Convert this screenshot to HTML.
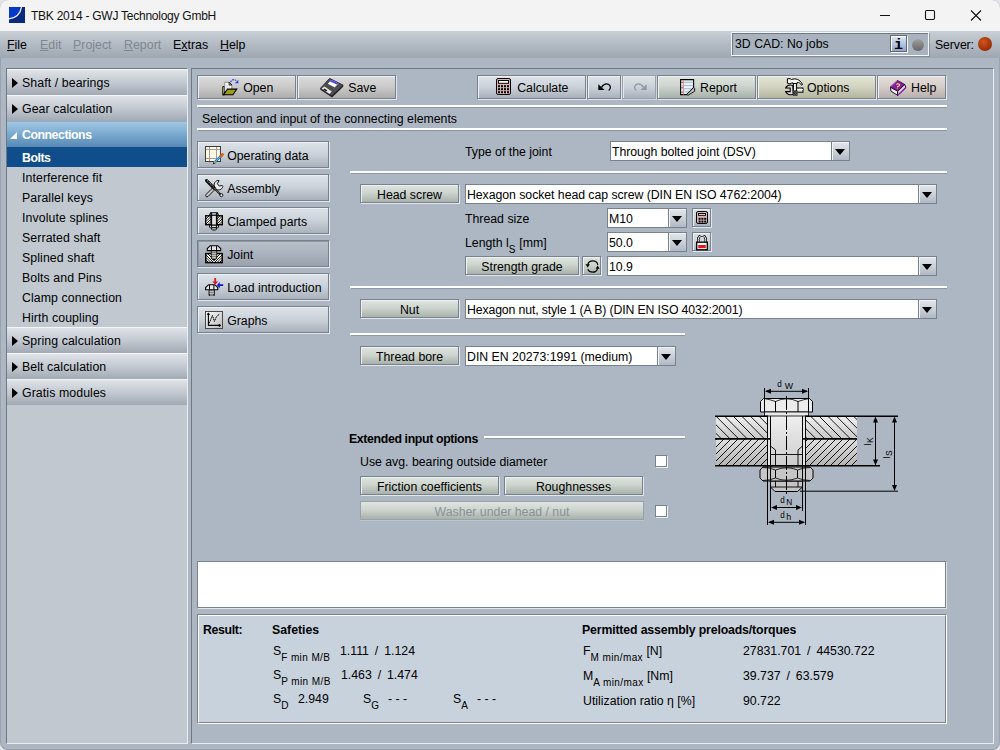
<!DOCTYPE html>
<html><head><meta charset="utf-8"><title>TBK 2014 - GWJ Technology GmbH</title>
<style>
html,body{margin:0;padding:0}
body{width:1000px;height:750px;overflow:hidden;position:relative;background:#e4e4e4;font-family:"Liberation Sans",sans-serif;font-size:12.3px;color:#000;line-height:1}
div,span{box-sizing:border-box}
.a{position:absolute;white-space:nowrap}
#win{position:absolute;left:0;top:0;width:1000px;height:750px;background:#adb7c3;border-radius:8px 8px 8px 8px;overflow:hidden;box-shadow:inset 0 0 0 1px #9aa2ab}
#title{position:absolute;left:0;top:0;width:1000px;height:31px;background:#f3f3f3}
#menubar{position:absolute;left:0;top:31px;width:1000px;height:27px;background:linear-gradient(#c9cfd6 0%,#b4bcc5 45%,#9ea7b1 100%)}
.menu{position:absolute;top:38px;font-size:12.4px;line-height:15px}
.menu u{text-decoration:underline;text-underline-offset:1px}
.dis{color:#7f8791}
/* sidebar */
#side{position:absolute;left:6px;top:68px;width:182px;height:676px;background:#c1c8d0;border-top:1px solid #6f7984;border-left:1px solid #6f7984;border-right:1px solid #e9edf1;border-bottom:1px solid #e9edf1}
.hd{position:absolute;left:0;width:180px;height:26px;background:linear-gradient(#dfe3e8 0%,#c3c9d1 50%,#a1a9b3 100%);border-top:1px solid #f4f6f8;font-size:12.3px;line-height:27px;padding-left:15px;letter-spacing:.1px}
.hd.sel{background:linear-gradient(#a0c7e3 0%,#79a9cf 50%,#5889b5 100%);border-top:1px solid #8fb0c6;color:#fff;font-weight:bold;letter-spacing:-.45px}
.tri{position:absolute;left:5px;top:8px;width:0;height:0;border-left:6px solid #000;border-top:5px solid transparent;border-bottom:5px solid transparent}
.tri2{position:absolute;left:3px;top:10px;width:0;height:0;border-bottom:7px solid #fff;border-left:7px solid transparent}
.it{position:absolute;left:0;width:180px;height:20px;line-height:22px;padding-left:15px;letter-spacing:.1px}
.it.sel{background:#104e8b;color:#fff;font-weight:bold;letter-spacing:-.45px}
/* main */
#main{position:absolute;left:191px;top:68px;width:803px;height:676px;border-top:1px solid #6f7984;border-left:1px solid #6f7984;border-right:1px solid #e9edf1;border-bottom:1px solid #e9edf1}
.btn{position:absolute;border:1px solid #78828d;background:linear-gradient(#dee3e9 0%,#cad1d9 50%,#a9b1bc 100%);box-shadow:inset 1px 1px 0 #eef1f4,1px 1px 0 #e3e7ec;text-align:center;white-space:nowrap}
.btn.gray{background:linear-gradient(#dcdcdc 0%,#cacaca 50%,#acacac 100%)}
.btn.green{background:linear-gradient(#dfe4df 0%,#cdd5ce 45%,#a9b2aa 100%)}
.btn.olive{background:linear-gradient(#e3e4d4 0%,#d2d3c0 50%,#b4b5a0 100%)}
.btn.rose{background:linear-gradient(#e5dedb 0%,#d5ccc9 50%,#b8aeab 100%)}
.btn.down{background:linear-gradient(#b9c1cb 0%,#aab2bd 50%,#98a1ac 100%);box-shadow:inset 1px 1px 0 #8f98a3,1px 1px 0 #e3e7ec}
.btn.rd{border-color:#98a2ac;box-shadow:inset 1px 1px 0 #e4e8ec,1px 1px 0 #cfd5dc}
.btn.off{color:#8a9199;border-color:#98a2ac;box-shadow:0 1px 0 #bcc4cd}
.sep{position:absolute;height:3px;border-top:2px solid #fff;border-bottom:1px solid #8d97a3;border-left:1px solid #fff}
.cb{position:absolute;height:20px;border:1px solid #78828d;background:#fff;line-height:20px;padding-left:1px;white-space:nowrap;overflow:hidden}
.cb i{position:absolute;right:0;top:0;width:17px;height:18px;border-left:1px solid #78828d;background:linear-gradient(#e3e7ec 0%,#cbd1d9 50%,#b0b8c3 100%);box-shadow:inset 1px 1px 0 #f2f4f6}
.cb i:after{content:"";position:absolute;left:3px;top:7px;width:0;height:0;border-top:6px solid #000;border-left:5px solid transparent;border-right:5px solid transparent}
.chk{position:absolute;width:12px;height:12px;border:1px solid #78828d;background:#fff;box-shadow:1px 1px 0 #eef1f4}
sub{font-size:10px;vertical-align:baseline;position:relative;top:6px;letter-spacing:.4px}
.b{font-weight:bold;letter-spacing:-.45px}
</style></head><body>
<div id="win">
<div id="title">
<svg class="a" style="left:9px;top:7px" width="16" height="16" viewBox="0 0 16 16"><rect width="16" height="16" fill="#0a2a80"/><path d="M0 0H12.5C11.5 6.5 7 11 0 11.8Z" fill="#0838c8"/><path d="M0 11.8C7 11 11.5 6.5 12.5 0" fill="none" stroke="#fff" stroke-width="1.2"/></svg>
<div class="a" style="left:31px;top:9px;font-size:12px;letter-spacing:-.25px;line-height:15px;color:#111">TBK 2014 - GWJ Technology GmbH</div>
<svg class="a" style="left:870px;top:0" width="130" height="31" viewBox="0 0 130 31"><g stroke="#111" stroke-width="1.1" fill="none"><path d="M10 15.5H20"/><rect x="55.5" y="10.5" width="9" height="9" rx="1.2"/><path d="M101 10.5L111 20.5M111 10.5L101 20.5"/></g></svg>
</div>
<div id="menubar"></div>
<div class="menu" style="left:7px"><u>F</u>ile</div>
<div class="menu dis" style="left:40px"><u>E</u>dit</div>
<div class="menu dis" style="left:73px"><u>P</u>roject</div>
<div class="menu dis" style="left:124px"><u>R</u>eport</div>
<div class="menu" style="left:173px">E<u>x</u>tras</div>
<div class="menu" style="left:220px"><u>H</u>elp</div>
<div class="a" style="left:731px;top:32px;width:198px;height:24px;border:1px solid #f4f6f8;background:#a9b3bf;box-shadow:1px 1px 0 rgba(90,100,112,.45)"><div class="a" style="left:0;top:0;width:196px;height:22px;border-top:1px solid #6f7984;border-left:1px solid #6f7984"></div>
<div class="a" style="left:3px;top:4px;font-size:12.3px;line-height:15px">3D CAD: No jobs</div>
<div class="a" style="left:158px;top:2px;width:17px;height:17px;border:1px solid #5f6873;background:linear-gradient(#e2e9f6,#8fa3cb);box-shadow:inset 1px 1px 0 #fff,1px 1px 0 #f4f6f8;font-family:'Liberation Mono',monospace;font-weight:bold;font-size:15px;line-height:19px;text-align:center">i</div>
<div class="a" style="left:180px;top:6px;width:12px;height:12px;border-radius:6px;background:linear-gradient(#a0a0a0,#666)"></div>
</div>
<div class="a" style="left:935px;top:38px;font-size:12.3px;letter-spacing:-.1px;line-height:15px">Server:</div>
<div class="a" style="left:978px;top:37px;width:14px;height:14px;border-radius:7px;background:radial-gradient(circle at 40% 35%,#d0561f,#a23208 60%,#7a2505)"></div>
<div id="side">
<div class="hd" style="top:0px"><span class="tri"></span>Shaft / bearings</div>
<div class="hd" style="top:26px"><span class="tri"></span>Gear calculation</div>
<div class="hd sel" style="top:52px"><span class="tri2"></span>Connections</div>
<div class="it sel" style="top:78px">Bolts</div>
<div class="it" style="top:98px">Interference fit</div>
<div class="it" style="top:118px">Parallel keys</div>
<div class="it" style="top:138px">Involute splines</div>
<div class="it" style="top:158px">Serrated shaft</div>
<div class="it" style="top:178px">Splined shaft</div>
<div class="it" style="top:198px">Bolts and Pins</div>
<div class="it" style="top:218px">Clamp connection</div>
<div class="it" style="top:238px">Hirth coupling</div>
<div class="hd" style="top:258px"><span class="tri"></span>Spring calculation</div>
<div class="hd" style="top:284px"><span class="tri"></span>Belt calculation</div>
<div class="hd" style="top:310px"><span class="tri"></span>Gratis modules</div>
</div>
<div id="main">
<div class="btn gray" style="left:5px;top:6px;width:99px;height:24px;line-height:24px;"><svg class="a" style="left:24px;top:3px" width="17" height="17" viewBox="0 0 17 17"><path d="M.8 7.600h1.900v8.200H.8z" fill="#dcd44c" stroke="#000" stroke-width="1"/><path d="M2.800 3.200h4.300l2.700 2.800v6.500H2.800z" fill="#fff" stroke="#777" stroke-width=".8"/><path d="M7.100 3.200v2.800h2.700z" fill="#fff" stroke="#000" stroke-width=".9"/><path d="M4 6.200h2.500M4 8h4.200M4 9.800h2" stroke="#c4c4c4" stroke-width=".8"/><path d="M1.200 15.800L5.500 10.100h9.300L10.900 15.800z" fill="#a29c14" stroke="#000" stroke-width="1.100"/><path d="M8.600 3.100c.9-2.600 3.900-3.300 5.700-1.300" fill="none" stroke="#2a38ea" stroke-width="1.100" stroke-dasharray="1.800 .8"/><path d="M16.300 1v3.200h-3.500z" fill="#2a38ea"/></svg><span class="a" style="left:45.2px;top:0">Open</span></div>
<div class="btn gray" style="left:105px;top:6px;width:99px;height:24px;line-height:24px;"><svg class="a" style="left:22px;top:2px" width="25" height="20" viewBox="0 0 25 20"><path d="M23.200 7.200v1.600L12 19.500v-1.700z" fill="#1c1c1c"/><path d="M.3 10.400v1.300L12 19.500v-1.700z" fill="#2a2a2a"/><path d="M9.600.4L23.200 7.200 12 17.800.3 10.400z" fill="#4c4c4c" stroke="#24142c" stroke-width=".8"/><path d="M11.200 2.100l7.300 3.400-3.700 3.900-7-3.700z" fill="#fff"/><path d="M11.200 2.100l7.300 3.400-1.200 1.300-7.300-3.400z" fill="#4444ff"/><path d="M1.600 10.500l2.900-2 7.300 4.900-2.400 2.500z" fill="#e6e6e6"/><path d="M4.400 10.400l2.900 1.900-1.100 1.300-2.900-1.900z" fill="#1c1c1c"/><path d="M13 11l5-5" stroke="#777" stroke-width=".6" stroke-dasharray=".8 .8"/></svg><span class="a" style="left:50.2px;top:0">Save</span></div>
<div class="btn " style="left:285px;top:6px;width:109px;height:24px;line-height:24px;"><svg class="a" style="left:18px;top:2px" width="15" height="17" viewBox="0 0 15 17"><rect x=".5" y=".5" width="14" height="16" rx="1.600" fill="#dbb5ba" stroke="#000" stroke-width="1"/><rect x="2.500" y="2.500" width="10" height="2.8" fill="#fff" stroke="#000" stroke-width="1"/><rect x="2" y="7.2" width="2" height="2" fill="#000"/><rect x="5" y="7.2" width="2" height="2" fill="#000"/><rect x="8" y="7.2" width="2" height="2" fill="#000"/><rect x="11" y="7.2" width="2" height="2" fill="#000"/><rect x="2" y="10.2" width="2" height="2" fill="#000"/><rect x="5" y="10.2" width="2" height="2" fill="#000"/><rect x="8" y="10.2" width="2" height="2" fill="#000"/><rect x="11" y="10.2" width="2" height="2" fill="#000"/><rect x="2" y="13.2" width="2" height="2" fill="#000"/><rect x="5" y="13.2" width="2" height="2" fill="#000"/><rect x="8" y="13.2" width="2" height="2" fill="#000"/><rect x="11" y="13.2" width="2" height="2" fill="#000"/></svg><span class="a" style="left:39.2px;top:0">Calculate</span></div>
<div class="btn " style="left:395px;top:6px;width:34px;height:24px;line-height:24px;"><svg class="a" style="left:9.5px;top:6.5px" width="14" height="9" viewBox="0 0 14 9"><path d="M.3 1.300V7h6.200z" fill="#000"/><path d="M3.500 4.300C5.500 1.300 8 .3 10.500 1.300c2.500 1.200 2.500 4.500.2 6.200" fill="none" stroke="#000" stroke-width="1.300"/></svg></div>
<div class="btn rd" style="left:430px;top:6px;width:34px;height:24px;line-height:24px;"><svg class="a" style="left:10px;top:6.5px" width="14" height="9" viewBox="0 0 14 9"><path d="M13.700 1.300V7H7.500z" fill="#8f979f"/><path d="M10.500 4.300C8.500 1.300 6 .3 3.500 1.300 1 2.500 1 5.800 3.300 7.500" fill="none" stroke="#8f979f" stroke-width="1.300"/></svg></div>
<div class="btn green" style="left:465px;top:6px;width:99px;height:24px;line-height:24px;"><svg class="a" style="left:22px;top:3px" width="16" height="17" viewBox="0 0 16 17"><path d="M.6.600h13v8l-7 7H.6z" fill="#f4eeee" stroke="#000" stroke-width="1.100"/><path d="M1.200 3.300h12M1.200 6.500h12M1.200 9.700h10M1.200 12.900h7" stroke="#8ac4ea" stroke-width="1"/><path d="M3.400 1v14.500" stroke="#f28888" stroke-width="1.100"/><path d="M2 3.300v.1M2 8.300v.1M2 13.300v.1" stroke="#111" stroke-width="1" stroke-linecap="round"/><path d="M13.600 8.600l1.100 1v2.600l-6.500 4-1.600-.6z" fill="#c4c4c4" stroke="#000" stroke-width=".9"/></svg><span class="a" style="left:42px;top:0">Report</span></div>
<div class="btn olive" style="left:565px;top:6px;width:119px;height:24px;line-height:24px;"><svg class="a" style="left:27px;top:2px" width="19" height="19" viewBox="0 0 19 19"><rect x="11" y="10" width="7" height="4.200" fill="#e4e4e4" stroke="#000" stroke-width="1"/><path d="M11 11.500h7" stroke="#fff" stroke-width="1"/><path d="M7.800 7.600C4.500 6.300 1.800 7.800.6 10h4.600v3.600H.6c1.200 2.600 4.400 4 7.600 2.600z" fill="#dcdcdc" stroke="#000" stroke-width="1.100"/><rect x="8.600" y="5" width="3" height="8" fill="#dedede" stroke="#000" stroke-width="1"/><path d="M9.700 6v6.500" stroke="#fff" stroke-width="1"/><rect x="7.800" y="12.800" width="4.800" height="5" fill="#2c2c2c"/><path d="M8.500 13.500l3.500 3.500M8.500 16l1.500 1.500M10.500 13l2 2" stroke="#aaa" stroke-width=".5"/><path d="M2.400.7h2.700l1.400.8c4-1.400 8.400-.4 11 5l-.9.700c-1.300-2.200-2.700-2.900-4.400-2.700v1h-4.700v-.8c-1.200.1-1.700.9-2.400 1.100l-2.700-.6z" fill="#f4f4f4" stroke="#000" stroke-width="1"/></svg><span class="a" style="left:49px;top:0">Options</span></div>
<div class="btn rose" style="left:685px;top:6px;width:69px;height:24px;line-height:24px;"><svg class="a" style="left:12px;top:4px" width="17" height="17" viewBox="0 0 17 17"><path d="M.5 7.200l.4 3.800 6.600 4.300 .2-4z" fill="#f2f2f2" stroke="#000" stroke-width=".9"/><path d="M7.700 11.300l7-6.800 1.200 3L7.500 15.500z" fill="#d8d8d8" stroke="#000" stroke-width=".9"/><path d="M7.500 15.500L15.900 7.500" stroke="#8a1aa8" stroke-width="1.200"/><path d="M7.500.4l7.200 4L7.300 10.900.4 7z" fill="#8a18a8" stroke="#2c0838" stroke-width=".8"/><path d="M1 6.500L7.400 1" stroke="#d8a0e8" stroke-width=".7" stroke-dasharray=".7 .7"/><text x="5.700" y="8.600" font-family="Liberation Sans,sans-serif" font-weight="bold" font-size="7.500" fill="#ffe81c" transform="rotate(8 8 6)">?</text></svg><span class="a" style="left:33px;top:0">Help</span></div>
<div class="sep" style="left:5px;top:36px;width:750px"></div>
<div class="a " style="left:10px;top:43px;line-height:15px;">Selection and input of the connecting elements</div>
<div class="sep" style="left:5px;top:59px;width:750px"></div>
<div class="btn " style="left:5px;top:72px;width:132px;height:27px;line-height:28px;"><svg class="a" style="left:7px;top:4px" width="19" height="19" viewBox="0 0 19 19"><rect x=".5" y=".5" width="15" height="15" fill="#fdfbe2" stroke="#3c3c3c" stroke-width="1"/><path d="M4.500 1v14M11.500 1v14M1 3.500h14M1 12.500h14" stroke="#a8989c" stroke-width="1"/><path d="M9.300 16.700l7.300-7.300" stroke="#1a84d6" stroke-width="2.600"/><path d="M10 16l6.600-6.600" stroke="#6cc0f4" stroke-width=".8"/><path d="M16 10l1.500-1.500" stroke="#e25c10" stroke-width="2.800" stroke-linecap="round"/><path d="M7.800 18.200l.7-2.500 1.800 1.800z" fill="#111"/><path d="M9.200 16.800l.9-.9" stroke="#f08a24" stroke-width="2.600"/></svg><span class="a" style="left:29.2px;top:0">Operating data</span></div>
<div class="btn " style="left:5px;top:105px;width:132px;height:27px;line-height:28px;"><svg class="a" style="left:7px;top:4px" width="19" height="19" viewBox="0 0 19 19"><path d="M1 15.500L9.200 7.300l2 2L3 17.500c-1.500 1.100-3.100-.5-2-2z" fill="#c6c6c6" stroke="#151515" stroke-width="1"/><path d="M9.600 8.200C8.300 5.200 9.800 2.300 12.800 1.300l1.300.4-1.800 3 2 2.400 3-.6.600 1c-1 3.200-4 4.200-6.500 2.800z" fill="#ececec" stroke="#151515" stroke-width="1"/><path d="M1.600 1.600L9 9" stroke="#111" stroke-width="3.200" stroke-linecap="round"/><path d="M2.200 1.500L8.400 7.700" stroke="#fff" stroke-width=".8" stroke-dasharray="1.200 .8"/><path d="M9 9l7 7" stroke="#222" stroke-width="1.900"/><path d="M9.500 9.300l6.300 6.300" stroke="#fff" stroke-width=".6" stroke-dasharray="1 1"/><circle cx="16.400" cy="16.200" r="1.500" fill="#f2f2f2" stroke="#111" stroke-width="1"/></svg><span class="a" style="left:29.2px;top:0">Assembly</span></div>
<div class="btn " style="left:5px;top:138px;width:132px;height:27px;line-height:28px;"><svg class="a" style="left:7px;top:4px" width="18" height="19" viewBox="0 0 18 19"><path d="M4.600 3.300l1-2.600h6.800l1 2.600z" fill="#f4f4f4" stroke="#000" stroke-width="1.100"/><path d="M6.600.8v2.500M11.400.8v2.500" stroke="#000" stroke-width="1"/><rect x="6.600" y="3.300" width="4.800" height="9.900" fill="#e2e2e2" stroke="#000" stroke-width="1"/><rect x=".7" y="3.800" width="5.400" height="8.900" fill="#fffef0" stroke="#000" stroke-width="1.400"/><rect x="11.900" y="3.800" width="5.400" height="8.900" fill="#fffef0" stroke="#000" stroke-width="1.400"/><path d="M1 7l3-3M1 9.500l5-5M1 12l5-5M3 12.500l3-3M12 7l3-3M12 9.500l5-5M12 12l5-5M14 12.500l3-3" stroke="#000" stroke-width=".9"/><path d="M4.600 13.200h8.800v2.200l-1 .4H5.600l-1-.4z" fill="#e6e6e6" stroke="#000" stroke-width="1"/><path d="M6.600 13.200v2.500M11.400 13.200v2.500" stroke="#000" stroke-width="1"/><path d="M6.600 15.800h4.800v1.400l-.8.800H7.400l-.8-.8z" fill="#e6e6e6" stroke="#000" stroke-width="1"/></svg><span class="a" style="left:29.2px;top:0">Clamped parts</span></div>
<div class="btn down" style="left:5px;top:171px;width:132px;height:27px;line-height:28px;"><svg class="a" style="left:7px;top:4px" width="18" height="19" viewBox="0 0 18 19"><rect x=".8" y="8.600" width="16.400" height="9" fill="#fffdec" stroke="#000" stroke-width="1.500"/><path d="M1 10l7.500 7.500M1 12.500l5 5M1 15l2.500 2.500M3 9l4 4M17 10l-7.500 7.500M17 12.500l-5 5M17 15l-2.500 2.500M15 9l-4 4" stroke="#000" stroke-width=".9"/><path d="M5.800 5.500h6.400v8l-3.200 2.500-3.200-2.500z" fill="#000"/><path d="M6.600 6.900h4.800M6.600 8.900h4.800M6.600 10.900h4.800M6.800 12.900h4.400" stroke="#fff" stroke-width="1.100"/><path d="M2.300 5.600V3.600L5.200.7h7.600l2.900 2.900v2z" fill="#e4e4e4" stroke="#000" stroke-width="1.100"/><path d="M6.400 1v4.600M11.600 1v4.600" stroke="#000" stroke-width="1"/></svg><span class="a" style="left:29.2px;top:0">Joint</span></div>
<div class="btn " style="left:5px;top:204px;width:132px;height:27px;line-height:28px;"><svg class="a" style="left:7px;top:4px" width="19" height="19" viewBox="0 0 19 19"><path d="M3.600 12h6.200v5.200l-.8.800H4.400l-.8-.8z" fill="#000"/><path d="M4.400 13.100h4.600M4.400 15.100h4.600M4.800 17h3.800" stroke="#fff" stroke-width="1.100"/><path d="M.6 11.800V9.600l3-2.900h6.200l3 2.900v2.200z" fill="#e6e6e6" stroke="#000" stroke-width="1.100"/><path d="M4.500 7v4.800M8.900 7v4.800" stroke="#000" stroke-width="1"/><path d="M9.300 0h1.800v3.600h2.100l-3 3.100-3-3.100h2.100z" fill="#d41c24"/><path d="M18.200 6.300v1.700h-3.400v2.200l-2.900-3 2.900-3.100v2.200z" fill="#1414d0"/></svg><span class="a" style="left:29.2px;top:0">Load introduction</span></div>
<div class="btn " style="left:5px;top:237px;width:132px;height:27px;line-height:28px;"><svg class="a" style="left:7px;top:4px" width="18" height="18" viewBox="0 0 18 18"><defs><linearGradient id="gg" x1="0" y1="0" x2="1" y2="1"><stop offset="0" stop-color="#fafafa"/><stop offset="1" stop-color="#bcbcbc"/></linearGradient></defs><rect x=".5" y=".5" width="17" height="17" fill="url(#gg)" stroke="#484848" stroke-width="1"/><path d="M3.400 2v12.400h12" fill="none" stroke="#000" stroke-width="1.100"/><path d="M2 3.600h2.800L3.400 1.800zM14 13v2.800l1.800-1.400z" fill="#000" stroke="#000" stroke-width=".5"/><path d="M4.200 12.300L7.400 4.400l2 6 2.200-5 3-2.300" fill="none" stroke="#000" stroke-width="1" stroke-dasharray="1.500 .5"/></svg><span class="a" style="left:29.2px;top:0">Graphs</span></div>
<div class="a " style="left:273px;top:76px;line-height:15px;">Type of the joint</div>
<div class="cb" style="left:418px;top:72px;width:240px;letter-spacing:-0.07px">Through bolted joint (DSV)<i></i></div>
<div class="sep" style="left:158px;top:102px;width:597px"></div>
<div class="btn green" style="left:168px;top:115px;width:99px;height:19px;line-height:20px;">Head screw</div>
<div class="cb" style="left:273px;top:115px;width:472px;letter-spacing:-0.05px">Hexagon socket head cap screw (DIN EN ISO 4762:2004)<i></i></div>
<div class="a " style="left:273px;top:143px;line-height:15px;">Thread size</div>
<div class="cb" style="left:415px;top:139px;width:80px;letter-spacing:0px">M10<i></i></div>
<div class="btn " style="left:500px;top:139px;width:19px;height:19px;line-height:20px;"><svg class="a" style="left:3px;top:2px" width="12" height="13" viewBox="0 0 12 13"><rect x=".5" y=".5" width="11" height="12" rx="1.600" fill="#dbb5ba" stroke="#000" stroke-width="1"/><rect x="2.500" y="2.500" width="7" height="1.8" fill="#fff" stroke="#000" stroke-width="1"/><rect x="2.6" y="6.8" width="2" height="2" fill="#000"/><rect x="5.4" y="6.8" width="2" height="2" fill="#000"/><rect x="8.2" y="6.8" width="2" height="2" fill="#000"/><rect x="2.6" y="9.6" width="2" height="2" fill="#000"/><rect x="5.4" y="9.6" width="2" height="2" fill="#000"/><rect x="8.2" y="9.6" width="2" height="2" fill="#000"/></svg></div>
<div class="a " style="left:273px;top:167px;line-height:15px;">Length l<sub>S</sub> [mm]</div>
<div class="cb" style="left:415px;top:163px;width:80px;letter-spacing:0px">50.0<i></i></div>
<div class="btn " style="left:500px;top:163px;width:19px;height:19px;line-height:20px;"><svg class="a" style="left:3px;top:2px" width="12" height="16" viewBox="0 0 12 16"><path d="M2.300 7.500V4.200a3.700 3.700 0 0 1 7.400 0V7.500" fill="none" stroke="#111" stroke-width="2.600"/><path d="M2.300 7.500V4.200a3.700 3.700 0 0 1 7.400 0V7.500" fill="none" stroke="#f4f4f4" stroke-width="1"/><rect x=".7" y="7.200" width="10.600" height="7.600" fill="#fff" stroke="#000" stroke-width="1.300"/><rect x="2.200" y="10" width="7.600" height="3.200" fill="#e8141c"/></svg></div>
<div class="btn green" style="left:273px;top:187px;width:114px;height:19px;line-height:20px;">Strength grade</div>
<div class="btn green" style="left:390px;top:187px;width:19px;height:19px;line-height:20px;"><svg class="a" style="left:1.5px;top:2.5px" width="16" height="14" viewBox="0 0 16 14"><path d="M2.700 4.600C3.500 2.200 5.500 .9 7.700 .9c2.700 0 4.700 1.700 5.200 3.900" fill="none" stroke="#000" stroke-width="1.200"/><path d="M2.800 9.300c.8 1.800 2.700 2.900 4.900 2.900 2.400 0 4.300-1.400 4.900-3.700" fill="none" stroke="#000" stroke-width="1.200"/><path d="M.5 4.300h4.400L2.700 7.400z" fill="#000"/><path d="M12.600 5.400l2 3.300h-4z" fill="#000"/></svg></div>
<div class="cb" style="left:415px;top:187px;width:330px;letter-spacing:0px">10.9<i></i></div>
<div class="sep" style="left:158px;top:217px;width:597px"></div>
<div class="btn green" style="left:168px;top:230px;width:99px;height:19px;line-height:20px;">Nut</div>
<div class="cb" style="left:273px;top:230px;width:472px;letter-spacing:-0.14px">Hexagon nut, style 1 (A B) (DIN EN ISO 4032:2001)<i></i></div>
<div class="sep" style="left:158px;top:264px;width:335px"></div>
<div class="btn green" style="left:168px;top:277px;width:99px;height:19px;line-height:20px;">Thread bore</div>
<div class="cb" style="left:273px;top:277px;width:211px;letter-spacing:0px">DIN EN 20273:1991 (medium)<i></i></div>
<div class="a b" style="left:157px;top:363px;line-height:15px;letter-spacing:-.35px">Extended input options</div>
<div class="sep" style="left:292px;top:367px;width:201px"></div>
<div class="a " style="left:168px;top:386px;line-height:15px;">Use avg. bearing outside diameter</div>
<div class="chk" style="left:463px;top:386px"></div>
<div class="btn green" style="left:168px;top:407px;width:139px;height:19px;line-height:20px;">Friction coefficients</div>
<div class="btn green" style="left:312px;top:407px;width:139px;height:19px;line-height:20px;">Roughnesses</div>
<div class="btn green off" style="left:168px;top:432px;width:284px;height:19px;line-height:20px;">Washer under head / nut</div>
<div class="chk" style="left:463px;top:436px"></div>
<svg class="a" style="left:508px;top:301px" width="220" height="165" viewBox="700 370 220 165"><defs><linearGradient id="pg" x1="0" y1="0" x2="0" y2="1"><stop offset="0" stop-color="#f0f0f0"/><stop offset="1" stop-color="#c8c8c8"/></linearGradient><linearGradient id="pg2" x1="0" y1="0" x2="0" y2="1"><stop offset="0" stop-color="#e0e0e0"/><stop offset="1" stop-color="#b4b4b4"/></linearGradient><linearGradient id="bg" x1="0" y1="0" x2="0" y2="1"><stop offset="0" stop-color="#f2f2f2"/><stop offset="1" stop-color="#bdbdbd"/></linearGradient><pattern id="h1" width="8.5" height="8.5" patternUnits="userSpaceOnUse" patternTransform="translate(716 416) rotate(45)"><line x1="0" y1="0" x2="0" y2="8.5" stroke="#000" stroke-width="0" /><line x1="0" y1="4" x2="8.5" y2="4" stroke="#000" stroke-width=".9" transform=""/></pattern><clipPath id="c1"><rect x="716" y="416" width="52" height="23"/><rect x="805" y="416" width="52" height="23"/></clipPath><clipPath id="c2"><rect x="716" y="439" width="52" height="27"/><rect x="805" y="439" width="52" height="27"/></clipPath></defs><rect x="716" y="416" width="141" height="23" fill="url(#pg)"/><rect x="716" y="439" width="141" height="27" fill="url(#pg2)"/><path d="M690.0 416l23 23M698.6 416l23 23M707.2 416l23 23M715.8 416l23 23M724.4 416l23 23M733.0 416l23 23M741.6 416l23 23M750.2 416l23 23M758.8 416l23 23M767.4 416l23 23M776.0 416l23 23M784.6 416l23 23M793.2 416l23 23M801.8 416l23 23M810.4 416l23 23M819.0 416l23 23M827.6 416l23 23M836.2 416l23 23M844.8 416l23 23M853.4 416l23 23M862.0 416l23 23" stroke="#000" stroke-width=".9" clip-path="url(#c1)" fill="none"/><path d="M690.0 466l27-27M697.0 466l27-27M704.0 466l27-27M711.0 466l27-27M718.0 466l27-27M725.0 466l27-27M732.0 466l27-27M739.0 466l27-27M746.0 466l27-27M753.0 466l27-27M760.0 466l27-27M767.0 466l27-27M774.0 466l27-27M781.0 466l27-27M788.0 466l27-27M795.0 466l27-27M802.0 466l27-27M809.0 466l27-27M816.0 466l27-27M823.0 466l27-27M830.0 466l27-27M837.0 466l27-27M844.0 466l27-27M851.0 466l27-27M858.0 466l27-27M865.0 466l27-27M872.0 466l27-27M879.0 466l27-27M886.0 466l27-27M893.0 466l27-27" stroke="#000" stroke-width=".9" clip-path="url(#c2)" fill="none"/><rect x="768" y="416" width="37" height="50" fill="#e6e6e6"/><rect x="770.5" y="412" width="32" height="75" fill="url(#bg)"/><path d="M770.5 481V487l4.500 4.500H797.500l5-4.500V481z" fill="#c4c4c4" stroke="#000" stroke-width="1"/><path d="M760.5 401.500l3-3H809.500l3 3V412H760.500z" fill="#ececec" stroke="#000" stroke-width="1"/><path d="M764 398.500q6 1 11.500 3 11-5.500 22.500 0 5.500-2 11.500-3" fill="none" stroke="#000" stroke-width=".8"/><path d="M775.500 401V412M798 401V412" stroke="#000" stroke-width="1"/><rect x="764.500" y="412" width="44" height="4" fill="#e8e8e8" stroke="#000" stroke-width=".8"/><path d="M763 467H810l3 3v8l-3 3H763l-3-3v-8z" fill="#c6c6c6" stroke="#000" stroke-width="1"/><path d="M763 467.500q6.500 0 12.500 2.500 11-4.500 22 0 6-2.500 12.500-2.500M763 480.500q6.500 0 12.500-2.500 11 4.500 22 0 6 2.500 12.500 2.500" fill="none" stroke="#000" stroke-width=".8"/><path d="M775.500 470v8M797.500 470v8" stroke="#000" stroke-width="1"/><path d="M715 416.200H768M805 416.200H898" stroke="#000" stroke-width="1.6"/><path d="M715 438.800H770M803 438.800H857" stroke="#000" stroke-width="1.8"/><path d="M715 465.800H857M857 465.800H880" stroke="#000" stroke-width="1.6"/><path d="M767.500 416V525M805.500 416V525" stroke="#000" stroke-width="1"/><path d="M770.500 416V511M802.500 416V511" stroke="#000" stroke-width="1"/><path d="M770.500 454.500H802.500M775.500 450V466M798 450V466M770.500 446l5 4M802.500 446l-4.500 4M775.500 481v6M798 481v6M771 487H802" stroke="#000" stroke-width=".9"/><path d="M786.500 396V494" stroke="#000" stroke-width="1" stroke-dasharray="14 2 2 2"/><path d="M800 491.200H898" stroke="#000" stroke-width="1"/><path d="M764.500 388V412M808.500 388V412M766 391.300H807" stroke="#000" stroke-width="1"/><path d="M765 391.300l6-2.500v5zM808 391.300l-6-2.500v5z" fill="#000"/><path d="M875.500 418V464M894.500 418V489" stroke="#000" stroke-width="1"/><path d="M875.500 416.500l-2.500 6h5zM875.500 465.500l-2.500-6h5zM894.500 416.500l-2.500 6h5zM894.500 491l-2.500-6h5z" fill="#000"/><path d="M772 507.500H801M769 522.300H804" stroke="#000" stroke-width="1"/><path d="M771 507.500l6-2.500v5zM802 507.500l-6-2.500v5zM768 522.300l6-2.500v5zM805 522.300l-6-2.500v5z" fill="#000"/><g font-family="Liberation Sans,sans-serif" fill="#000" font-size="9.500"><text x="777.300" y="387" textLength="4.500" lengthAdjust="spacingAndGlyphs">d</text><text x="784.800" y="389" font-size="9.500" textLength="8.300" lengthAdjust="spacingAndGlyphs">W</text><text x="780.300" y="503" textLength="4.500" lengthAdjust="spacingAndGlyphs">d</text><text x="786.300" y="505" textLength="6" lengthAdjust="spacingAndGlyphs">N</text><text x="780.300" y="518" textLength="4.500" lengthAdjust="spacingAndGlyphs">d</text><text x="786.300" y="520" textLength="5" lengthAdjust="spacingAndGlyphs">h</text><text transform="translate(870.500 445.500) rotate(-90)" font-size="8.500">l</text><text transform="translate(873.200 443) rotate(-90)" font-size="8.500">K</text><text transform="translate(889.500 458.500) rotate(-90)" font-size="8.500">l</text><text transform="translate(892.200 456) rotate(-90)" font-size="8.500">S</text></g></svg>
<div class="a" style="left:5px;top:492px;width:749px;height:47px;border:1px solid #78828d;background:#fff;box-shadow:1px 1px 0 #dfe4ea"></div>
<div class="a" style="left:5px;top:545px;width:750px;height:110px;background:#c8d2dc;border:1px solid #fff;border-top-color:#78828d;border-left-color:#78828d"><div class="a" style="left:0;top:0;width:748px;height:108px;border:1px solid #78828d;border-top-color:#fff;border-left-color:#fff"></div></div>
<div class="a b" style="left:11px;top:554px;line-height:15px;letter-spacing:-.33px">Result:</div>
<div class="a b" style="left:80px;top:554px;line-height:15px;letter-spacing:0">Safeties</div>
<div class="a " style="left:81px;top:575px;line-height:15px;">S<sub>F min M/B</sub></div>
<div class="a " style="left:148px;top:575px;line-height:15px;word-spacing:2.5px">1.111 / 1.124</div>
<div class="a " style="left:81px;top:599px;line-height:15px;">S<sub>P min M/B</sub></div>
<div class="a " style="left:149px;top:599px;line-height:15px;word-spacing:2.5px">1.463 / 1.474</div>
<div class="a " style="left:81px;top:623px;line-height:15px;">S<sub>D</sub></div>
<div class="a " style="left:106px;top:623px;line-height:15px;word-spacing:2.5px">2.949</div>
<div class="a " style="left:171px;top:623px;line-height:15px;">S<sub>G</sub></div>
<div class="a " style="left:196px;top:623px;line-height:15px;">- - -</div>
<div class="a " style="left:261px;top:623px;line-height:15px;">S<sub>A</sub></div>
<div class="a " style="left:285px;top:623px;line-height:15px;">- - -</div>
<div class="a b" style="left:390px;top:554px;line-height:15px;letter-spacing:-.15px">Permitted assembly preloads/torques</div>
<div class="a " style="left:391px;top:575px;line-height:15px;">F<sub>M min/max</sub> [N]</div>
<div class="a " style="left:551px;top:575px;line-height:15px;word-spacing:2.5px">27831.701 / 44530.722</div>
<div class="a " style="left:391px;top:600px;line-height:15px;">M<sub>A min/max</sub> [Nm]</div>
<div class="a " style="left:551px;top:600px;line-height:15px;word-spacing:2.5px">39.737 / 63.579</div>
<div class="a " style="left:391px;top:625px;line-height:15px;">Utilization ratio η [%]</div>
<div class="a " style="left:551px;top:625px;line-height:15px;word-spacing:2.5px">90.722</div>
</div>
</div>
</body></html>
